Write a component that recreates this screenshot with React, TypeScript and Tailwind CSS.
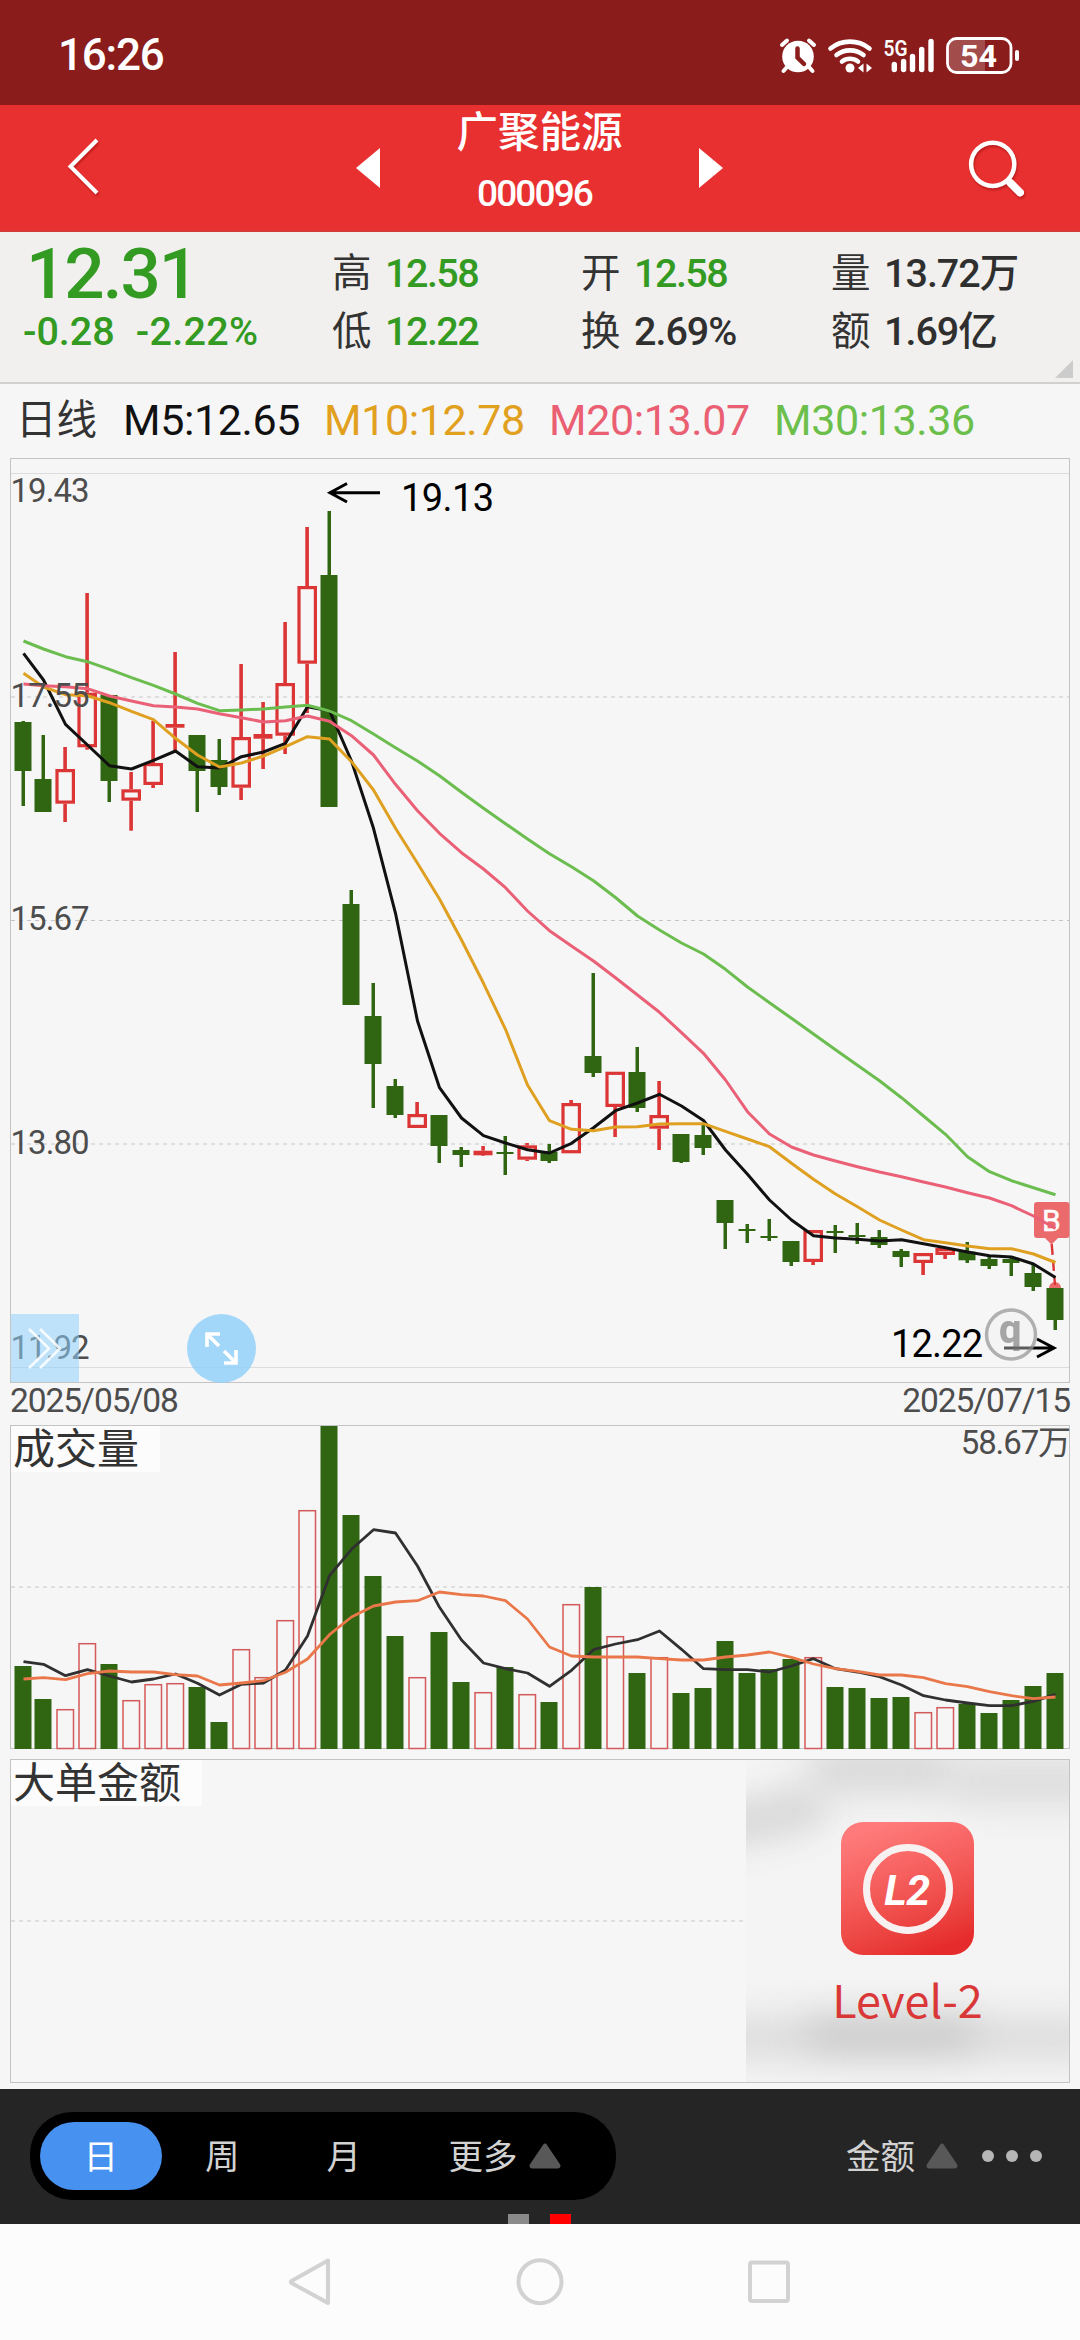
import React from 'react';
import clsx from 'clsx';

type Dir = 'up' | 'down';

interface Candle {
  dir: Dir;
  high: number;
  top: number;
  bottom: number;
  low: number;
}

const candle = (dir: Dir, high: number, top: number, bottom: number, low: number): Candle => ({
  dir,
  high,
  top,
  bottom,
  low,
});

// y values are in chart pixels
const CANDLES: Candle[] = [
  candle('down', 721, 722, 771, 806),
  candle('down', 735, 779, 812, 812),
  candle('up', 747, 769, 803.7, 822),
  candle('up', 593, 692.7, 747.3, 749.7),
  candle('down', 695, 695, 781, 802),
  candle('up', 772, 789.3, 800.7, 830.7),
  candle('up', 721, 763, 785, 788),
  candle('up', 652, 724, 727.7, 752),
  candle('down', 735, 735, 771, 812),
  candle('down', 739, 760, 787, 795),
  candle('up', 664, 737, 787.7, 800),
  candle('up', 702, 734, 738.7, 769),
  candle('up', 622, 683, 735.7, 754),
  candle('up', 527, 586, 663.7, 713),
  candle('down', 511, 575, 807, 807),
  candle('down', 890, 904, 1005, 1005),
  candle('down', 983, 1016, 1064, 1108),
  candle('down', 1079, 1086, 1115, 1118),
  candle('up', 1102, 1114, 1128, 1128),
  candle('down', 1115, 1115, 1146, 1163),
  candle('down', 1147, 1150, 1155, 1167),
  candle('up', 1146, 1150.7, 1155.3, 1156),
  candle('down', 1136, 1152, 1154, 1175),
  candle('up', 1143, 1145.3, 1159.7, 1161),
  candle('down', 1144, 1151.7, 1161, 1163),
  candle('up', 1100, 1103, 1153.3, 1153.3),
  candle('down', 973, 1056, 1073, 1077),
  candle('up', 1071.7, 1071.7, 1107, 1137),
  candle('down', 1047, 1072, 1108, 1112),
  candle('up', 1081, 1115, 1128.7, 1150),
  candle('down', 1134, 1134, 1162, 1163),
  candle('down', 1124, 1135, 1148, 1155),
  candle('down', 1200, 1200, 1223, 1249),
  candle('down', 1224, 1229, 1231, 1243),
  candle('down', 1219, 1236, 1238, 1241),
  candle('down', 1241, 1241, 1262, 1266),
  candle('up', 1230, 1230, 1262, 1265),
  candle('down', 1225, 1231, 1233, 1253),
  candle('down', 1223, 1235, 1237, 1244),
  candle('down', 1230, 1237, 1245, 1248),
  candle('down', 1249, 1251, 1257, 1267),
  candle('up', 1253, 1253, 1263, 1275),
  candle('up', 1247, 1248, 1255, 1259),
  candle('down', 1242, 1251.7, 1260.3, 1263),
  candle('down', 1257, 1259, 1266, 1269),
  candle('down', 1258, 1259, 1263, 1276),
  candle('down', 1264, 1273, 1287, 1291),
  candle('down', 1284, 1288, 1320, 1330),
];

const MA5 = [
  653.3, 680, 724.3, 745, 765.7, 769, 760.3, 751, 766.7, 768, 756.7, 752, 743.3, 706.7, 710.7, 761, 828.3, 913.3,
  1021, 1087.7, 1118, 1135.7, 1143, 1149.7, 1153, 1143.3, 1127.7, 1110.7, 1103, 1094.3, 1106, 1120.5, 1150, 1174.3,
  1200, 1220, 1235.7, 1238, 1239.3, 1241, 1239.7, 1243.7, 1247.7, 1252, 1255.7, 1257, 1264, 1277.5,
];
const MA10 = [
  673.3, 687, 694.7, 695.7, 702.7, 711.3, 719.7, 738.3, 755, 767, 763, 756, 746.7, 736.7, 739, 761.7, 790, 828.3,
  863.3, 899, 940, 983.3, 1029.3, 1085, 1120.7, 1129.3, 1130.7, 1127, 1126.7, 1124, 1123.7, 1123.7, 1131.3, 1139,
  1146.7, 1163.3, 1179.3, 1194, 1206.7, 1220, 1230, 1239.7, 1242.7, 1246, 1248.7, 1248.7, 1254, 1262.5,
];
const MA20 = [
  684, 685.7, 686.7, 688.7, 696, 701, 705.7, 707, 709, 713.7, 717.7, 722, 720.7, 716, 721.3, 735.7, 755, 784.3,
  810.7, 833.3, 852.7, 869, 887.7, 911, 930.7, 946, 961, 977.7, 995, 1012.3, 1032.7, 1053.3, 1080, 1111.7, 1134,
  1147, 1155, 1161, 1166.7, 1172, 1176.7, 1182, 1187, 1192.7, 1198, 1205.7, 1216, 1228.5,
];
const MA30 = [
  641, 649, 656.7, 661.7, 669.3, 677.7, 685.3, 694, 703.3, 710.7, 710, 709, 707, 705.3, 711, 720.7, 734, 747.7, 761,
  775.7, 792.3, 808.3, 823.7, 839, 853.7, 866.7, 880.7, 897.5, 916, 930, 943, 954, 969.3, 987, 1002.7, 1018.3, 1034,
  1049.7, 1065.3, 1080.7, 1097.7, 1116, 1134.3, 1156.7, 1171.7, 1180.7, 1187.7, 1194.7,
];

const VOLUME_BASE = 1749;
const VOLUME_TOPS = [
  1666, 1699, 1709, 1643, 1664, 1700, 1684, 1683, 1687, 1722, 1649, 1677, 1620, 1510, 1426, 1515, 1576, 1636, 1677,
  1632, 1682, 1692, 1667, 1694, 1702, 1604, 1587, 1636, 1673, 1657, 1693, 1688, 1641, 1673, 1669, 1659, 1657, 1687,
  1688, 1698, 1697, 1712, 1707, 1704, 1713, 1700, 1686, 1673,
];
const VOLUME_MA5 = [
  1661.7, 1664.3, 1675.7, 1669.7, 1676, 1682, 1679, 1674, 1683.3, 1695, 1684.3, 1683, 1670, 1636, 1575.7, 1549.3,
  1529.7, 1533, 1566, 1607.3, 1640, 1663, 1668.7, 1673, 1686.3, 1670.3, 1649.7, 1644, 1639.7, 1631, 1649.3, 1668.7,
  1669.7, 1669.7, 1672, 1666, 1658.7, 1668.7, 1672, 1676.7, 1685, 1695.7, 1700, 1703, 1705.7, 1705.7, 1701.3, 1694.3,
];
const VOLUME_MA10 = [
  1679, 1677.7, 1679.7, 1673.7, 1671, 1672, 1672, 1674.7, 1676, 1685, 1683, 1680.7, 1672.3, 1659, 1634.7, 1617, 1606,
  1602, 1600.7, 1592, 1594.7, 1596, 1600.7, 1619, 1647, 1656, 1657, 1657, 1657, 1658.7, 1660, 1660, 1657, 1655, 1652,
  1657.3, 1664, 1668.7, 1671.3, 1675, 1675, 1677.7, 1683.7, 1686.7, 1691.7, 1695.7, 1698.7, 1697,
];

const xAt = (i: number) => (i === 0 ? 23 : 43 + 22 * (i - 1));
const toPoints = (ys: number[]) => ys.map((y, i) => `${xAt(i) + 0.5},${y}`).join(' ');

const GREEN = '#306612';
const RED = '#dc3535';
const TEXT_FONT = "Roboto, 'Noto Sans CJK SC', sans-serif";

const StatusBar: React.FC = () => (
  <div className="h-[105px] bg-[#8a1c1b] flex items-center justify-between pl-[58px] pr-[59px] text-white">
    <span className="text-[44px] font-medium leading-[60px] tracking-[-1.200px] pt-1">16:26</span>
    <svg width="242" height="40" viewBox="778 33 242 40" className="mt-1" fill="none" stroke="#fff">
      {/* alarm */}
      <circle cx="797" cy="54.5" r="15.8" fill="#fff" stroke="none" />
      <path d="M781 43l5-4.500M813 43l-5-4.500M786 65l-3.500 4M808 65l3.500 4" strokeWidth="4" strokeLinecap="round" />
      <path d="M796.500 46.500v9l6.500 6.500" stroke="#8a1c1b" strokeWidth="4.500" strokeLinecap="round" />
      {/* wifi */}
      <path d="M829.500 46.500a31 31 0 0 1 39 0M835.500 53a22 22 0 0 1 27 0M841 59.500a13 13 0 0 1 16 0" strokeWidth="4.600" strokeLinecap="round" />
      <circle cx="849" cy="66" r="4.500" fill="#fff" stroke="none" />
      <path d="M862.500 61.500v9l-5.500-4.500zM865.500 61.500v9l5.500-4.500z" fill="#fff" stroke="none" />
      {/* signal */}
      <text x="882.500" y="53.500" fontFamily={TEXT_FONT} fontSize="22.500" fontWeight="600" fill="#fff" stroke="none" textLength="24" lengthAdjust="spacingAndGlyphs">5G</text>
      <path d="M893.300 62.500v5M902.600 59.500v8M911.500 54.500v13M920.700 47.500v20M930 39.500v28" strokeWidth="5.400" strokeLinecap="round" />
      {/* battery */}
      <path d="M984 37h-28q-8 0-8 8v16q0 8 8 8h28z" fill="#a24c4b" stroke="none" />
      <rect x="946.500" y="36.500" width="63.500" height="34" rx="9" strokeWidth="2.800" />
      <path d="M1016 50v7" strokeWidth="4" strokeLinecap="round" />
      <text x="959" y="64.800" fontFamily={TEXT_FONT} fontSize="32" fontWeight="700" fill="#fff" stroke="none" textLength="37" lengthAdjust="spacingAndGlyphs">54</text>
    </svg>
  </div>
);

const Header: React.FC = () => (
  <div className="h-[127px] bg-[#e83030] border-b-2 border-[#d63a38] flex items-start justify-between pl-[66px] pr-[54px] text-white">
    <svg width="36" height="60" viewBox="0 0 36 60" className="mt-[32px] drop-shadow-[1px_2px_1px_rgba(120,0,0,0.4)]" fill="none" stroke="#fff" strokeWidth="4">
      <path d="M31 3L4.500 29.500L31 56" />
    </svg>
    <div className="flex items-start ml-[11px]">
      <svg width="24" height="40" viewBox="0 0 24 40" className="mt-[43px]">
        <path d="M24 0v40L0 20z" fill="#fff" />
      </svg>
      <div className="w-[319px] flex flex-col items-center">
        <div className="mt-[3px] text-[41.500px] font-medium leading-[50px]">广聚能源</div>
        <div className="mt-[14px] mr-[10px] text-[37px] font-medium leading-[44px] tracking-[-1.900px]">000096</div>
      </div>
      <svg width="24" height="40" viewBox="0 0 24 40" className="mt-[43px]">
        <path d="M0 0v40L24 20z" fill="#fff" />
      </svg>
    </div>
    <svg width="60" height="62" viewBox="966 138 60 62" className="mt-[33px] drop-shadow-[1px_2px_1px_rgba(120,0,0,0.4)]" fill="none" stroke="#fff">
      <circle cx="992.700" cy="164.300" r="21.600" strokeWidth="4.500" />
      <path d="M1007.500 180l3 3" strokeWidth="5" />
      <path d="M1010.500 183l9.500 9.500" strokeWidth="8" strokeLinecap="round" />
    </svg>
  </div>
);

interface QuoteItemProps {
  label: string;
  value: string;
  green?: boolean;
}

const QuoteItem: React.FC<QuoteItemProps> = ({ label, value, green }) => (
  <div className="flex text-[39.500px] leading-[58px]">
    <span className="w-[53px] text-[#333]">{label}</span>
    <span className={clsx('font-medium', green ? 'text-[#339a22] tracking-[-1.500px]' : 'text-[#2f2f2f] tracking-[-1px]')}>{value}</span>
  </div>
);

const Quote: React.FC = () => (
  <div className="relative h-[152px] bg-[#f1f0ee] border-b-2 border-[#d0d0cf] pt-[13px] grid grid-cols-[332px_249px_250px_1fr] items-start whitespace-nowrap">
    <div className="text-[#339a22] font-medium">
      <div className="pl-[26px] text-[71px] leading-[58px] tracking-[-2px]">12.31</div>
      <div className="pl-[23px] flex gap-[21px] text-[39.500px] leading-[58px]">
        <span>-0.28</span>
        <span className="tracking-[0.300px]">-2.22%</span>
      </div>
    </div>
    <div>
      <QuoteItem label="高" value="12.58" green />
      <QuoteItem label="低" value="12.22" green />
    </div>
    <div>
      <QuoteItem label="开" value="12.58" green />
      <QuoteItem label="换" value="2.69%" />
    </div>
    <div>
      <QuoteItem label="量" value="13.72万" />
      <QuoteItem label="额" value="1.69亿" />
    </div>
    <svg width="18" height="18" viewBox="0 0 18 18" className="absolute right-[7px] bottom-[4px]">
      <path d="M18 0v18H0z" fill="#ccc" />
    </svg>
  </div>
);

const MaLegend: React.FC = () => (
  <div className="h-[74px] flex pl-[16px] text-[43px] leading-[73px] tracking-[-0.400px] whitespace-nowrap">
    <span className="w-[107px] text-[40.500px] tracking-normal text-[#333]">日线</span>
    <span className="w-[201px] text-[#111]">M5:12.65</span>
    <span className="w-[225px] text-[#e2a01f]">M10:12.78</span>
    <span className="w-[225px] text-[#ea6072]">M20:13.07</span>
    <span className="text-[#6cbf4b]">M30:13.36</span>
  </div>
);

const CandleBar: React.FC<{ c: Candle; x: number }> = ({ c, x }) => {
  if (c.dir === 'down') {
    return (
      <g fill={GREEN}>
        <rect x={x - 1.5} y={c.high} width="3.5" height={c.low - c.high} />
        <rect x={x - 8.5} y={c.top} width="17" height={Math.max(c.bottom - c.top, 2)} />
      </g>
    );
  }
  const h = c.bottom - c.top;
  return (
    <g fill={RED}>
      <rect x={x - 1.7} y={c.high} width="3.6" height={c.top - c.high} />
      <rect x={x - 1.7} y={c.bottom} width="3.6" height={c.low - c.bottom} />
      {h < 6 ? (
        <rect x={x - 9.5} y={c.top} width="19" height={h} />
      ) : (
        <rect x={x - 8} y={c.top + 1.6} width="16.4" height={h - 3.2} fill="none" stroke={RED} strokeWidth="3.2" />
      )}
    </g>
  );
};

const KLineChart: React.FC = () => (
  <div className="relative h-[924px]">
    <svg width="1080" height="924" viewBox="0 458 1080 924" className="block overflow-visible" fontFamily={TEXT_FONT}>
      <rect x="10.500" y="458.500" width="1059" height="924" fill="none" stroke="#c4c4c4" />
      <path d="M11 473.500H1069M11 1367.500H1069" stroke="#dcdcdc" />
      <path d="M11 697H1069M11 1144H1069" stroke="#dfdfdf" strokeWidth="2" strokeDasharray="4 4" />
      <path d="M11 920.500H1069" stroke="#c6c6c6" strokeDasharray="4 4" />
      {CANDLES.map((c, i) => (
        <CandleBar key={i} c={c} x={xAt(i)} />
      ))}

      {/* buy marker */}
      <path d="M1055 1287m-6 1a6 6 0 0 1 12 0z" fill="#ea6a6a" />
      <path d="M1051.700 1244L1055 1285" stroke="#dc3535" strokeWidth="2.400" strokeDasharray="11 5" />
      <path d="M1037 1202h29.500q3 0 3 3v30q0 3-3 3h-8.500l-6.500 6.500l-6.500-6.500h-8q-3 0-3-3v-30q0-3 3-3z" fill="#eb6b6c" />
      <text x="1042" y="1231" fontSize="30" fill="#fff" stroke="#fff" strokeWidth="0.500">B</text>

      <g fill="none" strokeWidth="3" strokeLinejoin="round">
        <polyline points={toPoints(MA5)} stroke="#111" />
        <polyline points={toPoints(MA10)} stroke="#dfa022" />
        <polyline points={toPoints(MA20)} stroke="#ea6076" />
        <polyline points={toPoints(MA30)} stroke="#6cbd50" />
      </g>

      <g fontSize="33" fill="#4d4d4d">
        <text x="10.500" y="502" textLength="79">19.43</text>
        <text x="10.500" y="706.500" textLength="79">17.55</text>
        <text x="10.500" y="930" textLength="79">15.67</text>
        <text x="10.500" y="1153.500" textLength="79">13.80</text>
        <text x="10.500" y="1359" textLength="79">11.92</text>
      </g>

      <g fill="none" stroke="#000" strokeWidth="3">
        <path d="M380 492.700H330M347 483.500L330 492.700L347 502" />
        <path d="M1004 1348H1054M1037 1339L1054 1348L1037 1357" />
      </g>
      <g fontSize="38" fill="#000">
        <text x="401" y="511" textLength="93">19.13</text>
        <text x="891" y="1356.700" textLength="92">12.22</text>
      </g>
      <g opacity="0.75">
        <circle cx="1011" cy="1334.500" r="24.500" fill="#f2f2f2" fillOpacity="0.500" stroke="#999" strokeWidth="3.500" />
        <text x="999" y="1343" fontSize="40" fontWeight="800" fill="#8a8a8a" fontFamily="Roboto">q</text>
      </g>
    </svg>

    <button className="absolute left-[11px] bottom-0 w-[68px] h-[68px] bg-[#90d2fb]/55">
      <svg width="68" height="68" viewBox="0 0 68 68" fill="none" stroke="#fff" strokeOpacity="0.850" strokeWidth="2.600">
        <path d="M18 15L38 34.500L18 54M29 15L49 34.500L29 54" />
      </svg>
    </button>
    <button className="absolute left-[187px] -bottom-px w-[69px] h-[69px] rounded-full bg-[#8fd0fa]/80">
      <svg width="69" height="69" viewBox="187 1314 69 69" fill="none" stroke="#fff" strokeWidth="3.600">
        <path d="M220 1334H207V1347M207.500 1334.500L219 1346M224 1363H236V1350M235.500 1362.500L224 1351" />
      </svg>
    </button>
  </div>
);

const DateAxis: React.FC = () => (
  <div className="h-[43px] flex justify-between pl-[10px] pr-[10px] text-[33.500px] leading-[37px] tracking-[-1.050px] text-[#4d4d4d]">
    <span>2025/05/08</span>
    <span>2025/07/15</span>
  </div>
);

const VolumeChart: React.FC = () => (
  <div className="relative h-[324px]">
    <svg width="1080" height="324" viewBox="0 1425 1080 324" className="block overflow-visible">
      <rect x="10.500" y="1425.500" width="1059" height="323" fill="none" stroke="#c4c4c4" />
      <path d="M11 1587H1069" stroke="#dfdfdf" strokeWidth="2" strokeDasharray="4 4" />
      {VOLUME_TOPS.map((top, i) =>
        CANDLES[i].dir === 'down' ? (
          <rect key={i} x={xAt(i) - 8.5} y={top} width="17" height={VOLUME_BASE - top} fill={GREEN} />
        ) : (
          <rect key={i} x={xAt(i) - 8} y={top + 0.7} width="16.500" height={VOLUME_BASE - top - 1.2} fill="none" stroke="#d35a5a" strokeWidth="1.500" />
        )
      )}
      <g fill="none" strokeWidth="2.800" strokeLinejoin="round">
        <polyline points={toPoints(VOLUME_MA5)} stroke="#303030" />
        <polyline points={toPoints(VOLUME_MA10)} stroke="#ea774a" />
      </g>
    </svg>
    <div className="absolute left-[11px] top-px w-[149px] h-[46px] bg-[#fcfcfc] pl-[2px] text-[42px] leading-[48px] text-[#333]">成交量</div>
    <div className="absolute right-[10px] top-px text-[33px] leading-[34px] tracking-[-1.100px] text-[#4d4d4d]">58.67万</div>
  </div>
);

const BigOrderChart: React.FC = () => (
  <div className="relative mt-[10px] mx-[10px] h-[324px] border border-[#c4c4c4] flex justify-between">
    <div className="w-[735px] flex items-center">
      <svg width="732" height="2" viewBox="0 0 732 2">
        <path d="M0 1H732" stroke="#dfdfdf" strokeWidth="2" strokeDasharray="4 4" />
      </svg>
    </div>
    <div className="absolute left-0 top-0 w-[191px] h-[46px] bg-[#fcfcfc] pl-[2px] text-[42px] leading-[48px] text-[#333]">大单金额</div>
    <div className="relative w-[323px] overflow-hidden bg-[#f4f4f4] flex flex-col items-center">
      <div className="absolute -left-12 top-[38px] w-[130px] h-[40px] -rotate-12 rounded-full bg-[#c8c8c8]/70 blur-[18px]" />
      <div className="absolute left-[60px] -top-[12px] w-[150px] h-[44px] rounded-full bg-[#cbcbcb]/70 blur-[18px]" />
      <div className="absolute left-[200px] top-0 w-[180px] h-[44px] rounded-full bg-[#d2d2d2]/70 blur-[18px]" />
      <div className="absolute -left-10 bottom-[24px] w-[400px] h-[40px] rounded-full bg-[#d4d4d4]/80 blur-[18px]" />
      <div className="absolute left-[60px] bottom-[32px] w-[170px] h-[32px] rounded-full bg-[#bbb]/60 blur-[18px]" />
      <div className="relative mt-[62px] w-[133px] h-[133px] rounded-[22px] bg-linear-160 from-[#ff7a7b] from-10% to-[#e52b2b] to-90% flex items-center justify-center">
        <div className="w-[90px] h-[90px] rounded-full border-[7px] border-[#f8f1f1] flex items-center justify-center text-white text-[43px] leading-none font-bold italic tracking-[-0.500px] pt-[3px] pr-px">
          L2
        </div>
      </div>
      <div className="relative mt-[12px] font-['Noto_Sans_CJK_SC',sans-serif] text-[45px] leading-[64px] text-[#da3838]">Level-2</div>
    </div>
  </div>
);

const UpTriangle: React.FC = () => (
  <svg width="32" height="26" viewBox="0 0 32 26">
    <path d="M16 2.500L29.500 22.500Q29.500 23.500 28.500 23.500H3.500Q2.500 23.500 2.500 22.500z" fill="#585858" stroke="#585858" strokeWidth="4" strokeLinejoin="round" />
  </svg>
);

const PERIODS = ['日', '周', '月'];

const Toolbar: React.FC = () => (
  <div className="relative h-[135px] bg-[#252525] flex justify-between pt-[23px] pl-[30px] pr-[38px] text-[34.500px] text-[#d2d2d2]">
    <div className="w-[586px] h-[88px] rounded-[42px] bg-black flex items-center pl-[10px]">
      {PERIODS.map((name, i) => (
        <div
          key={name}
          className={clsx(
            'w-[121.500px] h-[68px] rounded-[34px] leading-[71px] text-center',
            i === 0 && 'bg-[#4791f0] text-white'
          )}
        >
          {name}
        </div>
      ))}
      <div className="flex items-center pl-[44px] gap-[11px]">
        <span className="pt-[3px]">更多</span>
        <UpTriangle />
      </div>
    </div>
    <div className="h-[88px] flex items-center">
      <span className="pt-[3px]">金额</span>
      <span className="ml-[11px]">
        <UpTriangle />
      </span>
      <div className="flex gap-[12px] ml-[24px]">
        <i className="w-[12px] h-[12px] rounded-full bg-[#b6b6b6]" />
        <i className="w-[12px] h-[12px] rounded-full bg-[#b6b6b6]" />
        <i className="w-[12px] h-[12px] rounded-full bg-[#b6b6b6]" />
      </div>
    </div>
    {/* page indicator */}
    <div className="absolute bottom-0 left-[508px] flex gap-[21px]">
      <i className="w-[21px] h-[10px] bg-[#8a8a8a]" />
      <i className="w-[21px] h-[10px] bg-[#ff0000]" />
    </div>
  </div>
);

const NavBar: React.FC = () => (
  <div className="h-[116px] bg-[#fcfcfc] flex items-start justify-between pt-[33px] pl-[285px] pr-[286px]">
    <svg width="48" height="50" viewBox="0 0 48 50" fill="none" stroke="#d2d2d2" strokeWidth="4" strokeLinejoin="round">
      <path d="M43 3.500V46L6.500 26Q5.500 25 6.500 24z" />
    </svg>
    <svg width="50" height="50" viewBox="0 0 50 50" className="ml-[3px]" fill="none" stroke="#d2d2d2" strokeWidth="4">
      <circle cx="25" cy="24.700" r="21.500" />
    </svg>
    <svg width="50" height="50" viewBox="0 0 50 50" fill="none" stroke="#d2d2d2" strokeWidth="4">
      <rect x="6" y="5.500" width="38" height="38.500" rx="2" />
    </svg>
  </div>
);

export default function App() {
  return (
    <div className="w-[1080px] h-[2340px] overflow-hidden bg-[#f6f6f6] font-[Roboto,'Noto_Sans_CJK_SC',sans-serif]">
      <StatusBar />
      <Header />
      <Quote />
      <MaLegend />
      <KLineChart />
      <DateAxis />
      <VolumeChart />
      <BigOrderChart />
      <div className="h-[6px]" />
      <Toolbar />
      <NavBar />
    </div>
  );
}
